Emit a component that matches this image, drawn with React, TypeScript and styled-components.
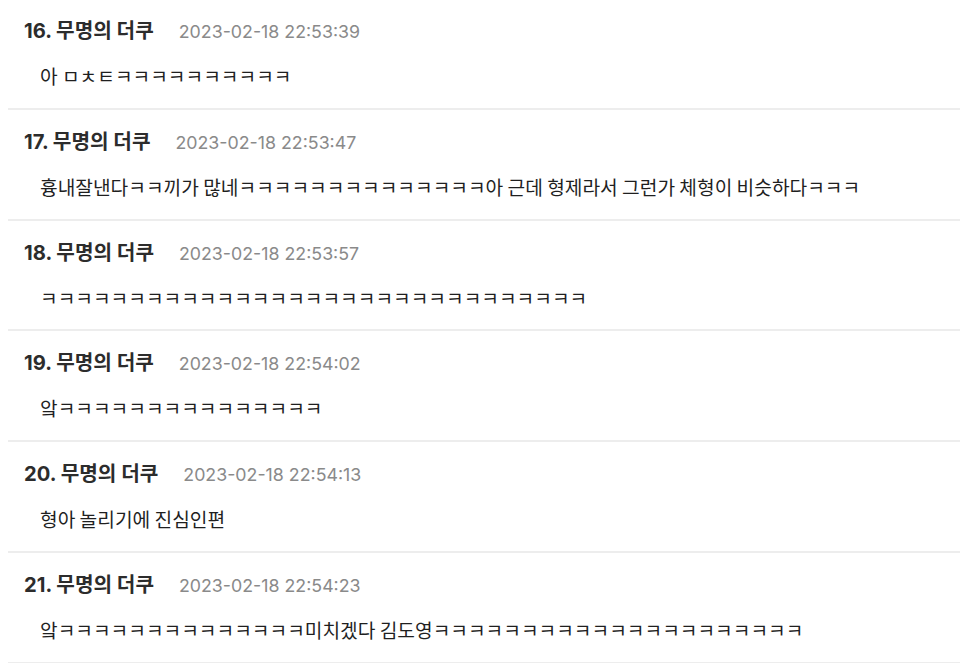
import React from "react";
import styled, { createGlobalStyle } from "styled-components";

const Global = createGlobalStyle`
  html, body { margin: 0; padding: 0; background: #fff; }
  body { font-family: "Inter", "Noto Sans CJK KR", sans-serif; overflow: hidden; }
`;

const List = styled.div`
  margin: -1px 0 0 8px;
  display: flex;
  flex-direction: column;
`;

const Item = styled.div`
  box-sizing: border-box;
  height: 110.8px;
  border-bottom: 2px solid #ededed;
  padding: 19px 0 0 16px;
  display: flex;
  flex-direction: column;
  gap: 18px;
`;

const Header = styled.div`
  display: flex;
  align-items: baseline;
  gap: 25px;
  line-height: 26px;
`;

const Name = styled.span`
  font-size: 20.2px;
  font-weight: 700;
  color: #2c2c2c;
`;

const DateText = styled.span`
  font-size: 17.8px;
  color: #8a8a8a;
`;

const Body = styled.div`
  padding-left: 16px;
  font-size: 19.2px;
  line-height: 26px;
  color: #1f1f1f;
  font-family: "Noto Sans CJK KR", sans-serif;
`;

const k = (n: number) => "ㅋ".repeat(n);

const comments = [
  { no: 16, date: "2023-02-18 22:53:39", text: "아 ㅁㅊㅌ" + k(10) },
  { no: 17, date: "2023-02-18 22:53:47", text: "흉내잘낸다ㅋㅋ끼가 많네" + k(14) + "아 근데 형제라서 그런가 체형이 비슷하다ㅋㅋㅋ" },
  { no: 18, date: "2023-02-18 22:53:57", text: k(31) },
  { no: 19, date: "2023-02-18 22:54:02", text: "앜" + k(15) },
  { no: 20, date: "2023-02-18 22:54:13", text: "형아 놀리기에 진심인편" },
  { no: 21, date: "2023-02-18 22:54:23", text: "앜" + k(14) + "미치겠다 김도영" + k(21) },
];

export default function App() {
  return (
    <>
      <Global />
      <List>
        {comments.map((c) => (
          <Item key={c.no}>
            <Header>
              <Name>{c.no}. 무명의 더쿠</Name>
              <DateText>{c.date}</DateText>
            </Header>
            <Body>{c.text}</Body>
          </Item>
        ))}
      </List>
    </>
  );
}
